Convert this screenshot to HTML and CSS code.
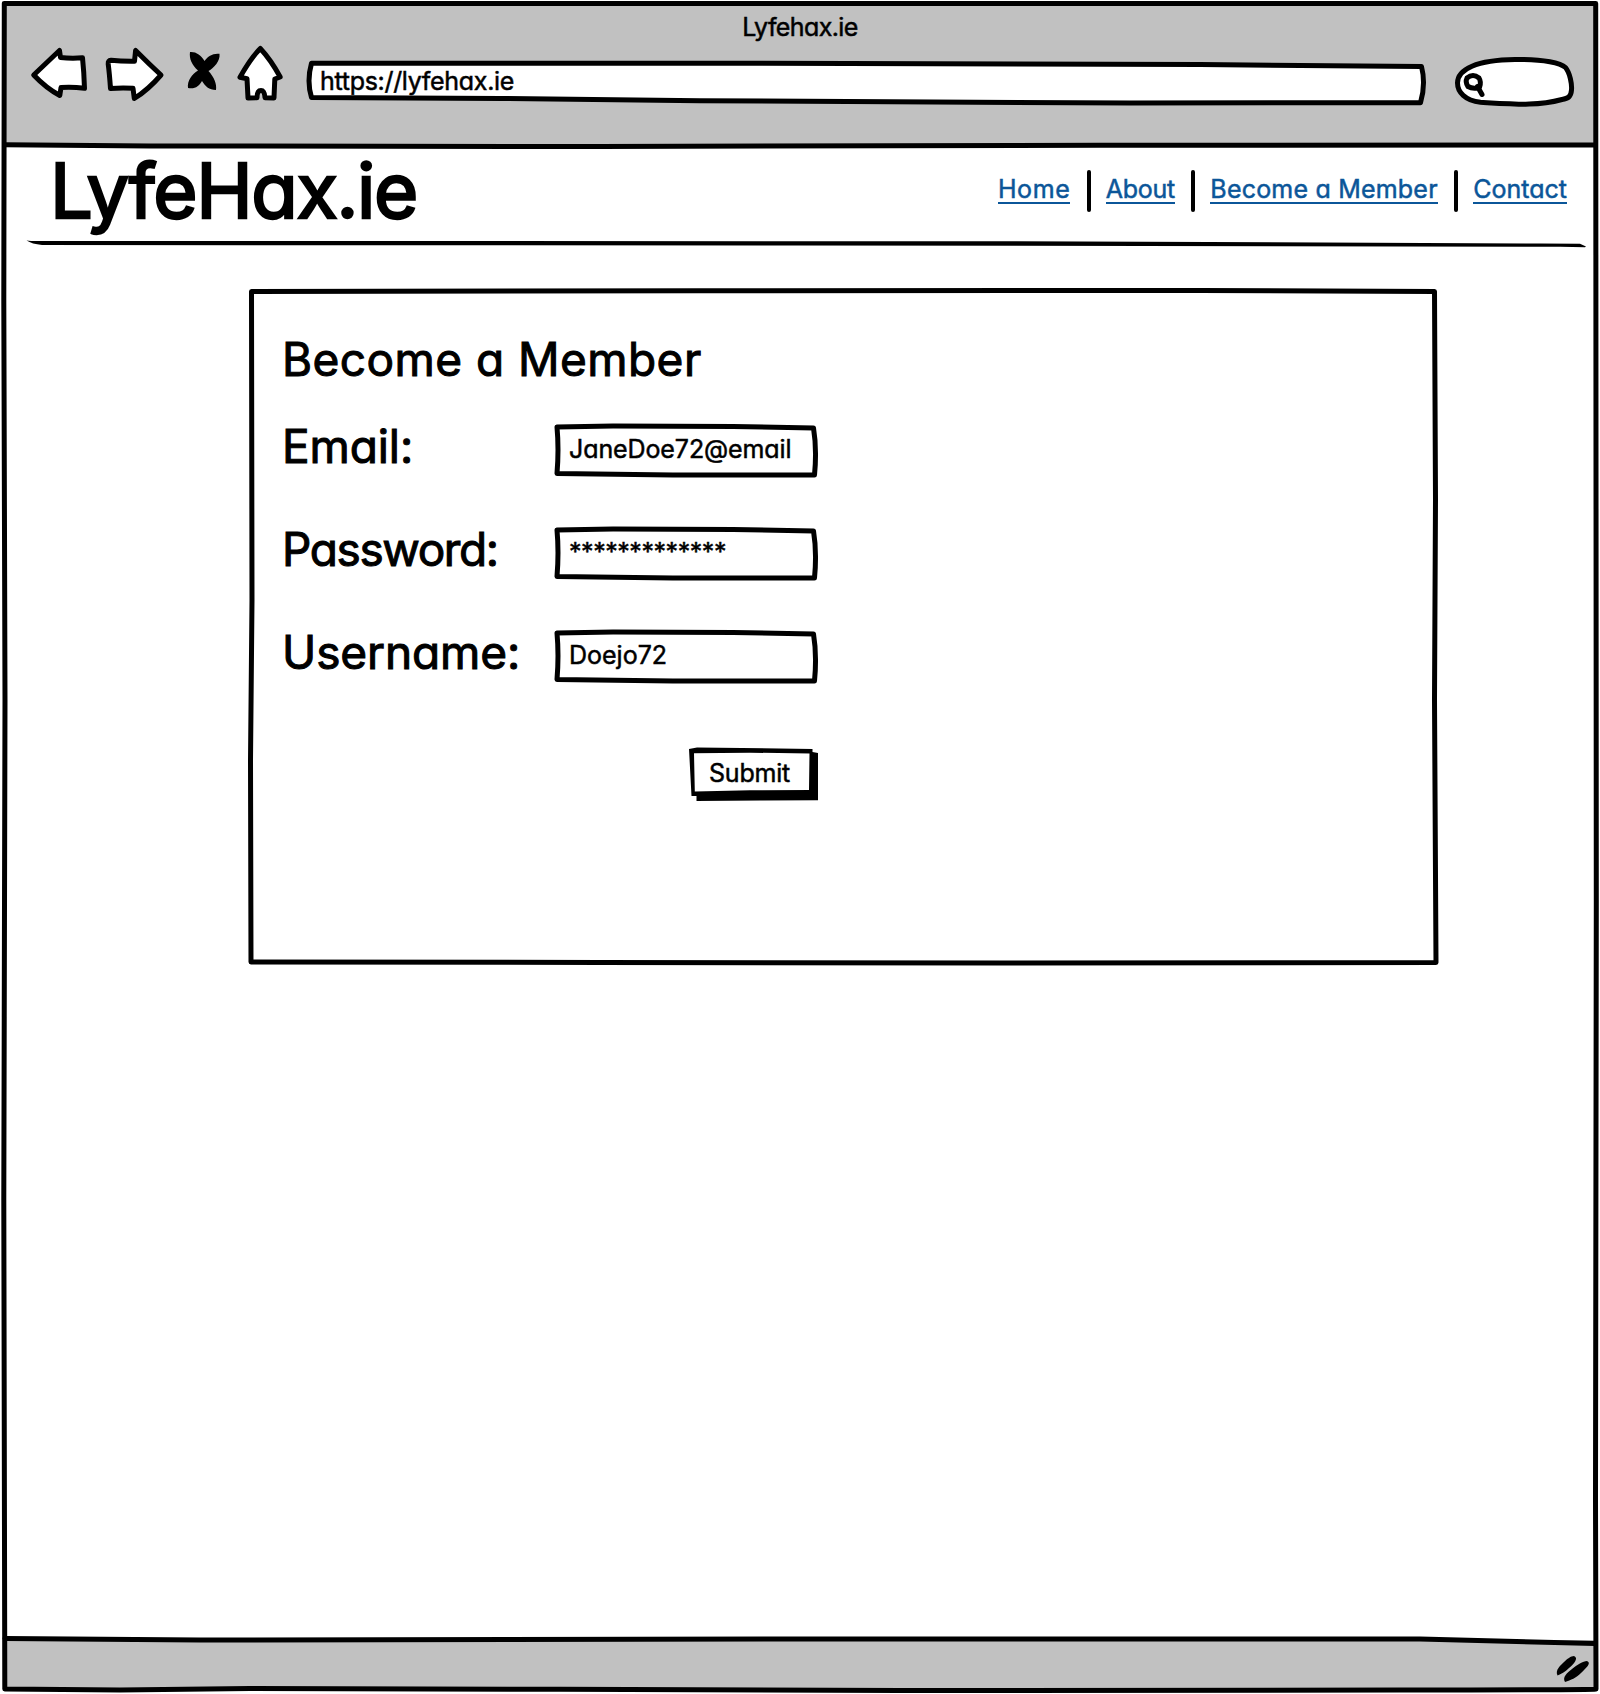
FILE: index.html
```html
<!DOCTYPE html>
<html lang="en">
<head>
<meta charset="utf-8">
<title>Lyfehax.ie</title>
<link rel="stylesheet" href="styles.css">
</head>
<body>
<div class="window">
  <header class="toolbar">
    <div class="window-title">Lyfehax.ie</div>
    <div class="tools">
      <svg class="tool back" viewBox="30 47 58 60"><path d="M33.7 75 59.5 50.5 60.5 57.5Q71 58.6 82.5 57.8 84 72 84.5 88.3 72 86.6 61 87.5L59.8 95.5Q46 88 33.7 75Z"/></svg>
      <svg class="tool forward" viewBox="104 47 60 60"><path d="M161 75Q149 64 135.6 50.5L134.5 61.3Q122 61.5 111 60.2 108 60.5 108.2 64 109.5 74 110.5 88.5 122 87.500 133 88.300L134.300 98.500Q148 90 161 75Z"/></svg>
      <svg class="tool stop" viewBox="186 47 36 60"><path class="ink" d="M190 52C196 51.500 201 55 204.500 61 208 56 213 53 219.500 53.800 220.500 61 214 68 208.500 71 214 77 217 84 216 90 209 90 205 86 202 81 199 86 195 89.500 188 88 187 81 192 74 198 70.500 192 65 189 59 190 52Z"/></svg>
      <svg class="tool home" viewBox="236 47 50 60"><path d="M260.300 48.500Q250 59 240 77.300L247 78.700 248 98 257 97.700Q257 90.500 261 90.500 264.500 90.500 265 97.700L274 98 274.800 79 280.200 77Q271 60 260.300 48.500Z"/></svg>
      <div class="address">
        <svg class="outline" viewBox="305 47 1123 60"><path d="M311.500 63.300 700 63.200 1200 64.500 1421.500 66.500Q1426 84 1420.500 102.700L1130 103 700 100.700 500 98.500 311.500 97.500Q306.500 81 311.500 63.300Z"/></svg>
        https://lyfehax.ie
      </div>
      <svg class="tool search" viewBox="1454 47 121 60"><path d="M1480.500 102.300C1465 100.500 1457.500 92 1457.500 83 1457.500 69 1477 60 1515 59.500 1545 59 1561 63.500 1565.500 67.500 1570 73 1572 84 1571.500 90 1571 97 1568 98.500 1562 99.500 1538 106 1520 104.500 1480.500 102.300Z"/><path d="M1467 78Q1473 73 1479 78 1481.500 82 1479.500 87.500 1473 89.500 1468 86.500 1465 82 1467 78ZM1477.500 86.500 1482 94.500"/></svg>
    </div>
  </header>
  <main class="page">
    <div class="masthead">
      <div class="logo">LyfeHax.ie</div>
      <nav class="nav">
        <a class="home-link">Home</a><i class="bar"></i>
        <a class="about-link">About</a><i class="bar"></i>
        <a class="member-link">Become a Member</a><i class="bar"></i>
        <a class="contact-link">Contact</a>
      </nav>
    </div>
    <svg class="rule" viewBox="26 238 1562 12"><path class="ink" d="M26.500 240.500Q32 241.300 42 241L1000 241.200 1540 243.500 1580 243.800 1586 246.500 1585 247.300 1560 246.800 800 245.500 42 245Q32 244 26.500 240.500Z"/></svg>
    <form class="card">
      <svg class="outline" viewBox="247 287 1192 680"><path d="M251.500 291.500 700 290.700 1200 290.500 1434.500 291.500 1435.500 500 1434.500 700 1436 962.500 1000 963 600 962.500 251 962 250.500 760 252 600Z"/></svg>
      <h1 class="heading">Become a Member</h1>
      <div class="field">
        <label class="email">Email:</label>
        <div class="entry"><svg class="outline" viewBox="0 0 266 56"><path d="M4 6 60 5 180 5.500 260.500 7Q264 28 261.500 54L120 54 4 52.500Q6 28 4 6Z"/></svg><span class="email-value">JaneDoe72@email</span></div>
      </div>
      <div class="field">
        <label class="password">Password:</label>
        <div class="entry"><svg class="outline" viewBox="0 0 266 56"><path d="M4 6 60 5 180 5.500 260.500 7Q264 28 261.500 54L120 54 4 52.500Q6 28 4 6Z"/></svg><span class="password-value">*************</span></div>
      </div>
      <div class="field">
        <label class="username">Username:</label>
        <div class="entry"><svg class="outline" viewBox="0 0 266 56"><path d="M4 6 60 5 180 5.500 260.500 7Q264 28 261.500 54L120 54 4 52.500Q6 28 4 6Z"/></svg><span>Doejo72</span></div>
      </div>
      <div class="submit"><svg class="outline" viewBox="688 747 132 56"><path class="ink" d="M689 750 697 748.500 812.500 750V753L818 754V801.300L760 801.500 696.500 802V797H691.500Z"/><path class="face" d="M694 754.200 750 753.700 809.500 754.500 809 791 750 791.300 694.800 792.500Z"/></svg>Submit</div>
    </form>
  </main>
  <footer class="status">
    <svg class="grip" viewBox="1554 1654 38 30"><path class="ink" d="M1574 1656C1579 1658 1574 1664 1569 1668 1565 1672 1561 1674 1557.500 1675.500 1555 1670 1560 1666 1564 1662 1567 1659 1571 1656 1574 1656ZM1587 1661C1592 1663 1586 1668 1581 1673 1576 1678 1571 1680 1565 1682 1562 1677 1567 1673 1572 1669 1577 1665 1583 1661 1587 1661Z"/></svg>
  </footer>
  <svg class="frame" viewBox="0 0 1600 1694">
    <path d="M4.300 3.500H1595.700L1596.300 900 1595.500 1500 1596 1689Q1590 1690 1400 1690L900 1690.500 560 1689.300 250 1688.500 120 1690 4.800 1689 3.800 1200 5 700 3.800 300Z"/>
    <path d="M5 144.800 150 146 600 146.500 1100 145.300 1595 145"/>
    <path d="M5 1638.500 200 1640 800 1639 1420 1639 1595 1643.500"/>
  </svg>
</div>
</body>
</html>
```
FILE: styles.css
```css
* { box-sizing: border-box; }
body {
  margin: 0;
  background: #fff;
  color: #000;
  font-family: Inter, "Liberation Sans", sans-serif;
  font-size: 25px;
  font-feature-settings: "cv11" 1;
  -webkit-text-stroke: 0.5px currentColor;
  white-space: nowrap;
}
svg { display: block; overflow: visible; fill: #fff; stroke: #000; stroke-width: 5; stroke-linejoin: round; stroke-linecap: round; }
svg .ink { fill: #000; stroke: none; }
svg .face { stroke: none; }
.window { position: relative; width: 1600px; height: 1694px; display: grid; grid-template-rows: 146px 1494px 50px; }
.frame { position: absolute; inset: 0; pointer-events: none; }
.frame path { fill: none; }
.outline { position: absolute; inset: 0; z-index: -1; width: 100%; height: 100%; }
.address, .card, .entry, .submit { position: relative; isolation: isolate; }

/* Browser chrome */
.toolbar { background: #c1c1c1; margin: 3px 4px 0; }
.window-title { height: 44px; padding-top: 4px; line-height: 40px; text-align: center; letter-spacing: -0.6px; }
.tools { display: flex; height: 60px; padding-left: 26px; }
.tool { height: 60px; flex: none; }
.back { width: 58px; }
.forward { width: 60px; margin-left: 16px; }
.stop { width: 36px; margin-left: 22px; }
.home { width: 50px; margin-left: 14px; }
.address { width: 1123px; margin-left: 19px; padding-left: 15px; line-height: 69px; letter-spacing: -0.3px; }
.search { width: 121px; margin-left: 26px; }

/* Masthead */
.page { padding: 0 4px; }
.masthead { display: flex; justify-content: space-between; height: 92px; padding: 0 29px 0 46px; }
.logo { font-size: 76px; line-height: 88px; letter-spacing: -1.4px; -webkit-text-stroke-width: 2.4px; }
.nav { display: flex; color: #0b5699; }
.nav a { height: 58px; line-height: 87px; border-bottom: 2px solid #0b5699; }
.home-link { letter-spacing: 0.6px; }
.about-link { letter-spacing: -0.3px; }
.member-link { letter-spacing: 0.2px; }
.bar { width: 4px; height: 42px; margin: 24px 15px 0 16.5px; border-radius: 2px; background: #000; }
.rule { width: 1562px; height: 12px; margin-left: 22px; }

/* Sign-up form */
.card { width: 1192px; height: 680px; margin: 37px 0 0 243px; padding: 46px 0 0 35px; }
.heading { margin: 0; height: 88px; font-size: 46px; font-weight: 400; line-height: 52px; letter-spacing: 0.45px; }
.heading, .field label { -webkit-text-stroke-width: 1px; }
.field { display: flex; height: 103px; }
.field label { width: 271px; font-size: 46px; line-height: 51px; }
.email { letter-spacing: -0.1px; }
.password { letter-spacing: -1.4px; }
.username { letter-spacing: -0.1px; }
.entry { width: 266px; height: 56px; padding-left: 16px; line-height: 56px; }
.email-value { letter-spacing: -0.1px; }
.password-value { letter-spacing: -0.45px; }
.submit { width: 132px; height: 56px; margin: 16px 0 0 406px; padding-left: 21px; line-height: 55px; letter-spacing: -0.2px; }

.status { background: #c1c1c1; margin: 0 4px; padding: 14px 4px 0 0; display: flex; justify-content: flex-end; }
.grip { width: 38px; height: 30px; }
```
